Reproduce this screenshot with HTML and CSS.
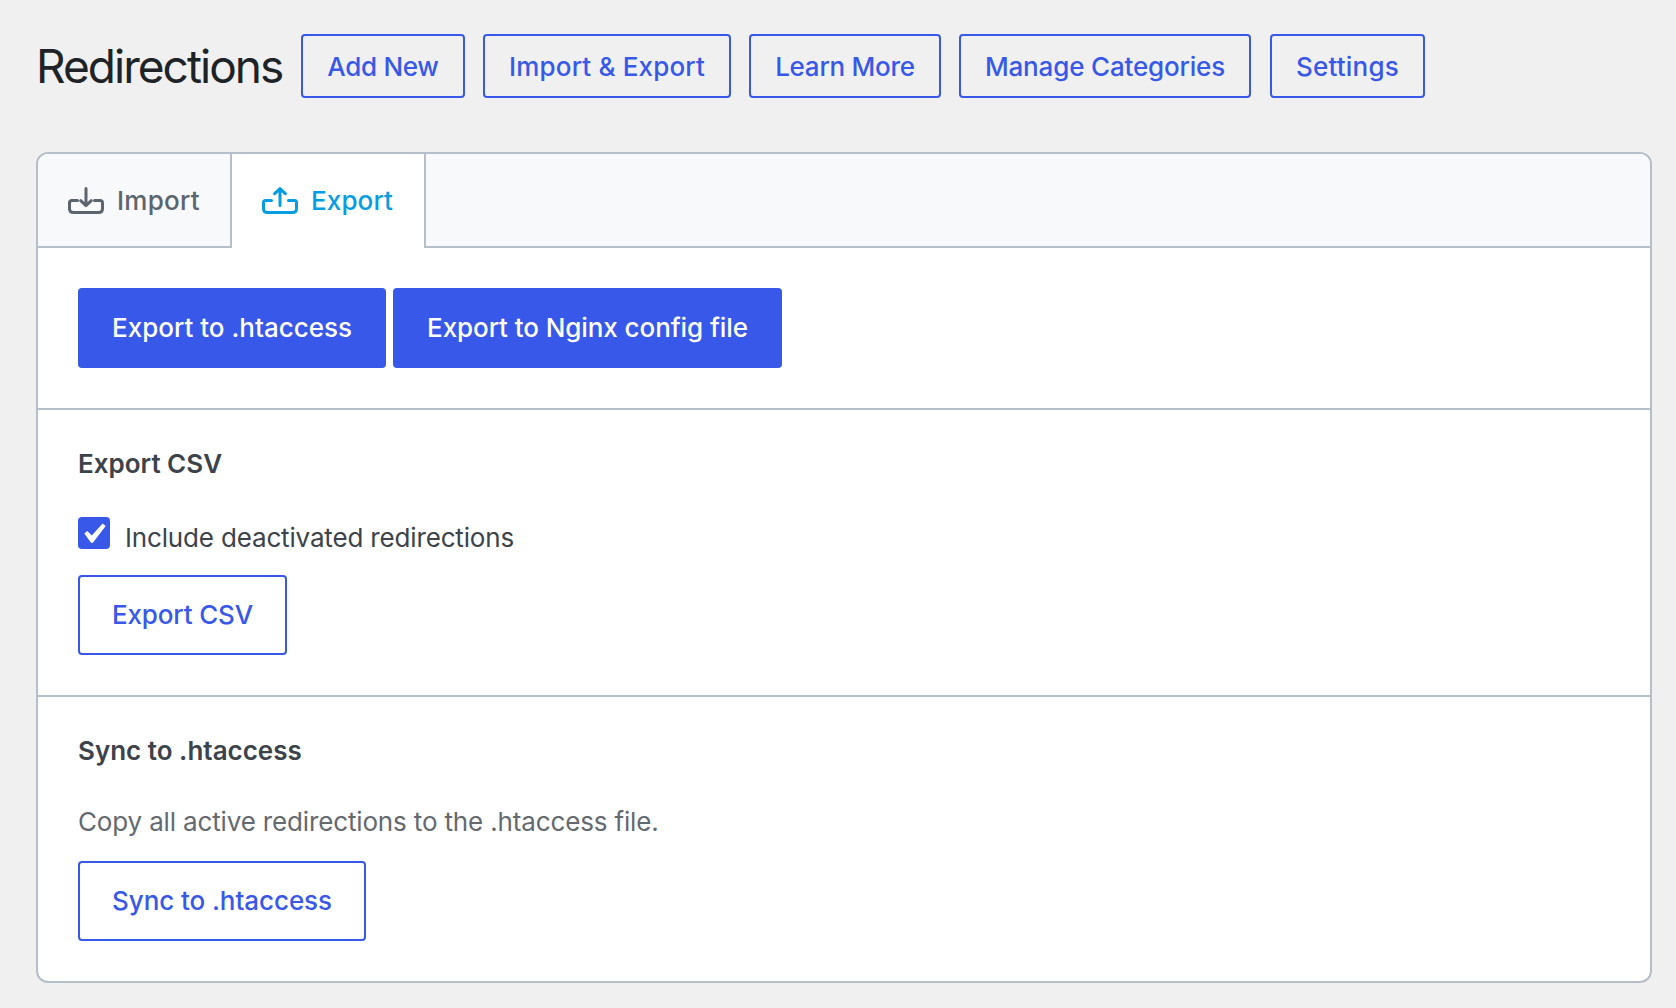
FILE: index.html
```html
<!DOCTYPE html>
<html lang="en">
<head>
    <meta charset="UTF-8">
    <meta name="viewport" content="width=device-width, initial-scale=1.0">
    <title>Redirections</title>
    <link rel="stylesheet" href="styles.css">
</head>
<body>
    <header class="page-header">
        <h1>Redirections</h1>
        <nav class="page-actions">
            <a href="#" class="button action add-new">Add New</a>
            <a href="#" class="button action import-export">Import &amp; Export</a>
            <a href="#" class="button action learn-more">Learn More</a>
            <a href="#" class="button action categories">Manage Categories</a>
            <a href="#" class="button action settings">Settings</a>
        </nav>
    </header>

    <main class="panel">
        <div class="tabs">
            <a href="#import" class="tab">
                <svg width="36" height="27" viewBox="0 0 36 27">
                    <path d="M9.5 13.5H4Q1.5 13.5 1.5 16V21.5Q1.5 25.5 5.5 25.5H30.5Q34.5 25.5 34.5 21.5V16Q34.5 13.5 32 13.5H26.5M18 1.5V18.5M12.7 13.7L18 18.7L23.3 13.7"/>
                </svg>
                <span class="tab-import">Import</span>
            </a>
            <a href="#export" class="tab active">
                <svg width="36" height="27" viewBox="0 0 36 27">
                    <path d="M9.5 13.5H3.5Q1.5 13.5 1.5 15.5V21.5Q1.5 25.5 5.5 25.5H30.5Q34.5 25.5 34.5 21.5V15.5Q34.5 13.5 32.5 13.5H26.5M18 18.5V2M12.7 6.7L18 1.7L23.3 6.7"/>
                </svg>
                <span class="tab-export">Export</span>
            </a>
        </div>

        <section class="export-files">
            <button type="button" class="button primary htaccess">Export to .htaccess</button>
            <button type="button" class="button primary nginx">Export to Nginx config file</button>
        </section>

        <section class="export-csv">
            <h2>Export CSV</h2>
            <label class="checkbox-row">
                <input type="checkbox" checked>
                <span class="checkbox">
                    <svg width="32" height="32" viewBox="0 0 32 32">
                        <path d="M6.3 16.4L9.3 14.1L13.8 18.4L24.6 6.4L27.7 8.9L15.3 25.3Q14 26.6 12.7 25.3Z"/>
                    </svg>
                </span>
                <span class="checkbox-label">Include deactivated redirections</span>
            </label>
            <button type="button" class="button csv">Export CSV</button>
        </section>

        <section class="sync">
            <h2>Sync to .htaccess</h2>
            <p>Copy all active redirections to the .htaccess file.</p>
            <button type="button" class="button sync-button">Sync to .htaccess</button>
        </section>
    </main>
</body>
</html>
```
FILE: styles.css
```css
* {
    box-sizing: border-box;
}

body {
    margin: 0;
    padding: 34px 24px 25px 36px;
    background: #f0f0f0;
    color: #3c434a;
    font-family: Inter, sans-serif;
    font-size: 26px;
    line-height: 32px;
}

.page-header {
    display: flex;
    align-items: center;
    height: 64px;
    margin-bottom: 54px;
}

h1 {
    width: 265px;
    margin: 0;
    padding-bottom: 1px;
    color: #1d2327;
    font-size: 46px;
    font-weight: 400;
    line-height: 62px;
    letter-spacing: -1.97px;
    white-space: nowrap;
}

.page-actions {
    display: flex;
    gap: 18px;
}

.button {
    display: flex;
    align-items: center;
    justify-content: center;
    height: 80px;
    padding: 0;
    border: 2px solid #3858e9;
    border-radius: 4px;
    background: none;
    color: #3858e9;
    font: 500 26px/32px Inter, sans-serif;
    text-decoration: none;
    white-space: nowrap;
    cursor: pointer;
}

.action {
    height: 64px;
    padding-top: 2px;
}

.primary {
    background: #3858e9;
    color: #fff;
}

.add-new {
    width: 164px;
    letter-spacing: -0.3px;
}

.import-export {
    width: 248px;
    letter-spacing: 0.17px;
}

.learn-more {
    width: 192px;
    letter-spacing: -0.25px;
}

.categories {
    width: 292px;
    letter-spacing: -0.17px;
}

.settings {
    width: 155px;
    margin-left: 1px;
    letter-spacing: 0.2px;
}

.htaccess {
    width: 308px;
}

.nginx {
    width: 389px;
    letter-spacing: -0.08px;
}

.csv {
    width: 209px;
    letter-spacing: -0.15px;
}

.sync-button {
    width: 288px;
    letter-spacing: -0.07px;
}

.panel {
    overflow: hidden;
    border: 2px solid #b5bfc9;
    border-radius: 12px;
    background: #fff;
}

.tabs {
    display: flex;
    height: 94px;
    background: linear-gradient(#b5bfc9, #b5bfc9) bottom / 100% 2px no-repeat #f8f9fb;
}

.tab {
    display: flex;
    align-items: center;
    gap: 13px;
    width: 194px;
    padding: 0 0 2px 30px;
    border-right: 2px solid #b5bfc9;
    color: #5c646d;
    font-weight: 500;
    text-decoration: none;
}

.tab svg {
    fill: none;
    stroke: currentColor;
    stroke-width: 3;
    stroke-linecap: round;
    stroke-linejoin: round;
}

.tab span {
    padding-top: 2px;
}

.tab.active {
    background: #fff;
    color: #069de3;
}

.tab-import {
    letter-spacing: 0.28px;
}

.tab-export {
    letter-spacing: 0.12px;
}

section {
    padding: 40px;
    border-bottom: 2px solid #b5bfc9;
}

section:last-child {
    border-bottom: 0;
}

.export-files {
    display: flex;
    gap: 7px;
}

h2 {
    margin: -2px 0 0;
    font-size: 26px;
    font-weight: 600;
    line-height: 32px;
}

.checkbox-row {
    display: flex;
    height: 32px;
    margin: 37px 0 26px;
}

.checkbox-row input {
    position: absolute;
    opacity: 0;
}

.checkbox {
    width: 32px;
    height: 32px;
    margin-right: 15px;
    border-radius: 4px;
    background: #3858e9;
}

.checkbox svg {
    display: block;
    fill: #fff;
}

.checkbox-label {
    padding-top: 5px;
    letter-spacing: -0.16px;
}

p {
    margin: 39px 0 23px;
    color: #646970;
    letter-spacing: -0.15px;
}
```
